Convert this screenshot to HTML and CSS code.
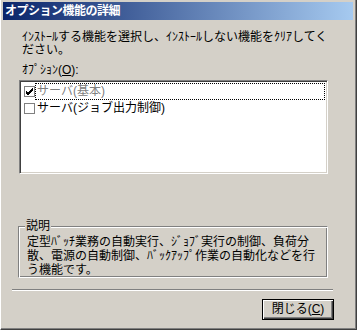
FILE: index.html
```html
<!DOCTYPE html>
<html lang="ja">
<head>
    <meta charset="UTF-8">
    <title>オプション機能の詳細</title>
    <link rel="stylesheet" href="styles.css">
</head>
<body>
    <div class="window">
        <div class="frame">
            <div class="titlebar">
                <span class="title">オプション機能の詳細</span>
            </div>
            <div class="content">
                <p class="intro">ｲﾝｽﾄｰﾙする機能を選択し、ｲﾝｽﾄｰﾙしない機能をｸﾘｱしてく<br>ださい。</p>
                <div class="field-label">ｵﾌﾟｼｮﾝ(<u>O</u>):</div>
                <div class="listbox">
                    <div class="item disabled">
                        <span class="check">
                            <svg width="9" height="9" viewBox="0 0 9 9"><path d="M1 4 L3 6 L8 1 M1 5 L3 7 L8 2 M1 6 L3 8 L8 3" stroke="#000" stroke-width="1" fill="none"/></svg>
                        </span>
                        <span class="item-text focused">サーバ(基本)</span>
                    </div>
                    <div class="item">
                        <span class="check"></span>
                        <span class="item-text">サーバ(ジョブ出力制御)</span>
                    </div>
                </div>
                <fieldset class="groupbox">
                    <legend>説明</legend>
                    <p class="desc">定型ﾊﾞｯﾁ業務の自動実行、ｼﾞｮﾌﾞ実行の制御、負荷分<br>散、電源の自動制御、ﾊﾞｯｸｱｯﾌﾟ作業の自動化などを行<br>う機能です。</p>
                </fieldset>
                <div class="separator"></div>
                <div class="actions">
                    <button class="btn default">閉じる(<u>C</u>)</button>
                </div>
            </div>
        </div>
    </div>
</body>
</html>
```

FILE: styles.css
```css
body {
    margin: 0;
    font-family: "Liberation Sans", "Noto Sans CJK JP", sans-serif;
    font-size: 12px;
    color: #000;
    background: #d4d0c8;
}

.window {
    width: 357px;
    height: 330px;
    box-sizing: border-box;
    display: flex;
    flex-direction: column;
    background: #d4d0c8;
    border-left: 1px solid #fff;
    border-right: 1px solid #404040;
    border-bottom: 1px solid #404040;
}

.frame {
    flex: 1;
    display: flex;
    flex-direction: column;
    padding: 2px 2px 1px 2px;
    border-right: 1px solid #808080;
    border-bottom: 1px solid #808080;
}

.titlebar {
    height: 18px;
    display: flex;
    align-items: center;
    padding-left: 2px;
    background: linear-gradient(to right, #0a246a 0%, #a6caf0 100%);
}

.title {
    color: #fff;
    font-weight: bold;
    font-size: 12px;
    line-height: 13px;
    letter-spacing: -0.5px;
}

.content {
    flex: 1;
    display: flex;
    flex-direction: column;
    padding: 0 20px 0 9px;
}

.intro {
    margin: 11px 0 0 10px;
    line-height: 13px;
    white-space: nowrap;
}

.field-label {
    margin: 7px 0 0 10px;
    line-height: 13px;
}

.listbox {
    margin: 3px 5px 0 7px;
    height: 94px;
    box-sizing: border-box;
    padding: 2px 0 0 2px;
    background: #fff;
    border-top: 1px solid #808080;
    border-left: 1px solid #808080;
    border-right: 1px solid #fff;
    border-bottom: 1px solid #fff;
    box-shadow: inset 1px 1px 0 #404040, inset -1px -1px 0 #d4d0c8;
}

.item {
    display: flex;
    align-items: center;
    height: 17px;
}

.check {
    width: 11px;
    height: 11px;
    box-sizing: border-box;
    margin-left: 2px;
    border: 1px solid #808080;
    background: #fff;
    display: flex;
    align-items: center;
    justify-content: center;
}

.item-text {
    flex: 1;
    height: 17px;
    box-sizing: border-box;
    line-height: 15px;
    padding-left: 1px;
    border: 1px solid transparent;
    white-space: nowrap;
}

.item-text.focused {
    border: 1px dotted #000;
    margin-right: 2px;
}

.item.disabled .item-text {
    color: #808080;
}

.groupbox {
    margin: 46px 5px 0 6px;
    padding: 0 8px 2px 8px;
    height: 58px;
    box-sizing: border-box;
    border: 1px solid #808080;
    border-right-color: #fff;
    border-bottom-color: #fff;
    box-shadow: inset 1px 1px 0 #fff, inset -1px -1px 0 #808080;
}

.groupbox legend {
    padding: 0 1px;
    margin-left: -2px;
    line-height: 13px;
    background: #d4d0c8;
}

.desc {
    margin: 2px 0 0 0;
    line-height: 14px;
    white-space: nowrap;
}

.separator {
    margin-top: 11px;
    height: 1px;
    background: #808080;
    border-bottom: 1px solid #fff;
}

.actions {
    display: flex;
    justify-content: flex-end;
    margin-top: 8px;
}

.btn {
    width: 72px;
    height: 21px;
    padding: 0;
    font-family: inherit;
    font-size: 12px;
    line-height: 13px;
    color: #000;
    background: #d4d0c8;
    border: 1px solid #000;
    box-shadow: inset 1px 1px 0 #fff, inset -1px -1px 0 #404040, inset -2px -2px 0 #808080;
    margin-right: -1px;
}
```
